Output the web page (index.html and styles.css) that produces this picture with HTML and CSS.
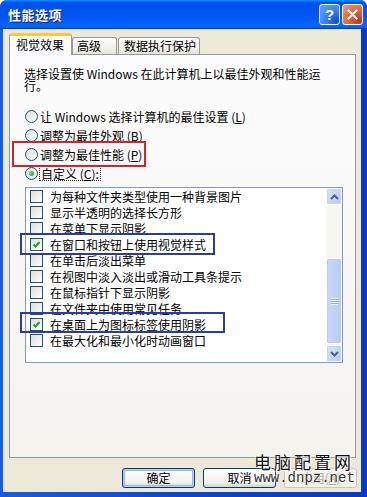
FILE: index.html
```html
<!DOCTYPE html>
<html lang="zh-CN">
<head>
<meta charset="utf-8">
<title>性能选项</title>
<link rel="stylesheet" href="styles.css">
</head>
<body>
<div class="window">
  <div class="titlebar">
    <span class="title">性能选项</span>
    <div class="tb-buttons">
      <span class="tb-btn help">?</span>
      <span class="tb-btn close"><svg width="11" height="11" viewBox="0 0 11 11"><path d="M1.5 1.5 L9.5 9.5 M9.5 1.5 L1.5 9.5" stroke="#fff" stroke-width="2" stroke-linecap="square"/></svg></span>
    </div>
  </div>
  <div class="client">
    <div class="tabs">
      <div class="tab active">视觉效果</div>
      <div class="tab t2">高级</div>
      <div class="tab t3">数据执行保护</div>
    </div>
    <div class="panel">
      <p class="desc">选择设置使 Windows 在此计算机上以最佳外观和性能运<br>行。</p>
      <div class="radios">
        <div class="radio-row"><span class="radio"></span><span>让 Windows 选择计算机的最佳设置 (<u>L</u>)</span></div>
        <div class="radio-row"><span class="radio"></span><span>调整为最佳外观 (<u>B</u>)</span></div>
        <div class="radio-row"><span class="radio"></span><span>调整为最佳性能 (<u>P</u>)</span></div>
        <div class="radio-row"><span class="radio on"></span><span class="focus">自定义 (<u>C</u>):</span></div>
      </div>
      <div class="listbox">
        <ul class="items">
          <li><span class="cb"></span>为每种文件夹类型使用一种背景图片</li>
          <li><span class="cb"></span>显示半透明的选择长方形</li>
          <li><span class="cb"></span>在菜单下显示阴影</li>
          <li><span class="cb"><svg width="11" height="11" viewBox="0 0 11 11"><path d="M2.5 5.5 L4.5 7.5 L8.5 3" fill="none" stroke="#21A121" stroke-width="2"/></svg></span>在窗口和按钮上使用视觉样式</li>
          <li><span class="cb"></span>在单击后淡出菜单</li>
          <li><span class="cb"></span>在视图中淡入淡出或滑动工具条提示</li>
          <li><span class="cb"></span>在鼠标指针下显示阴影</li>
          <li><span class="cb"></span>在文件夹中使用常见任务</li>
          <li><span class="cb"><svg width="11" height="11" viewBox="0 0 11 11"><path d="M2.5 5.5 L4.5 7.5 L8.5 3" fill="none" stroke="#21A121" stroke-width="2"/></svg></span>在桌面上为图标标签使用阴影</li>
          <li><span class="cb"></span>在最大化和最小化时动画窗口</li>
        </ul>
        <div class="scrollbar">
          <span class="sb-btn"><svg width="9" height="6" viewBox="0 0 9 6"><path d="M1 5 L4.5 1.5 L8 5" fill="none" stroke="#4D6185" stroke-width="2"/></svg></span>
          <span class="sb-track"></span>
          <span class="sb-thumb"><span class="grip"></span></span>
          <span class="sb-btn down"><svg width="9" height="6" viewBox="0 0 9 6"><path d="M1 1 L4.5 4.5 L8 1" fill="none" stroke="#4D6185" stroke-width="2"/></svg></span>
        </div>
      </div>
    </div>
    <div class="buttons">
      <span class="btn default">确定</span>
      <span class="btn">取消</span>
      <span class="btn disabled">应用(<u>A</u>)</span>
    </div>
  </div>
  <div class="mark red-box"></div>
  <div class="mark blue-box b1"></div>
  <div class="mark blue-box b2"></div>
  <div class="watermark">
    <div class="wm-cn">电脑配置网</div>
    <div class="wm-url">www.dnpz.net</div>
  </div>
</div>
</body>
</html>
```
FILE: styles.css
```css
* { box-sizing: border-box; }
html, body { margin: 0; padding: 0; background: #fff; }
body {
  width: 367px; height: 497px; overflow: hidden;
  font-family: "Noto Sans CJK SC", "Liberation Sans", sans-serif;
  font-size: 12px; color: #000;
}
u { text-decoration: underline; text-underline-offset: 1px; }

.window {
  position: relative;
  width: 367px; height: 497px;
  display: flex; flex-direction: column;
  background: linear-gradient(to right, #1A5BE0, #0A46D8 50%, #0838C8);
  border-radius: 7px 7px 0 0;
  overflow: hidden;
}
.titlebar {
  height: 29px; flex: none;
  display: flex; align-items: center; justify-content: space-between;
  padding: 0 4px 0 8px;
  background: linear-gradient(180deg, #0997ff, #0053ee 8%, #0050ee 40%, #06f 88%, #06f 93%, #005bff 95%, #003dd7 96%, #003dd7);
}
.title {
  color: #fff; font-weight: bold; font-size: 13px; letter-spacing: 0.5px;
  line-height: 14px; text-shadow: 1px 1px 0 #0F1A8C;
}
.tb-buttons { display: flex; gap: 2px; }
.tb-btn {
  width: 21px; height: 21px;
  border: 1px solid #fff; border-radius: 3px;
  display: flex; align-items: center; justify-content: center;
}
.help {
  background: radial-gradient(circle at 85% 85%, #0C4FD8 0%, #3A7EF2 45%, #6BA0F8 100%);
  color: #fff; font-family: "Liberation Sans", sans-serif; font-weight: bold; font-size: 15px; line-height: 1;
}
.close {
  background: radial-gradient(circle at 85% 85%, #C1361A 0%, #E2603A 45%, #EE9A7E 100%);
}

.client {
  flex: 1;
  margin: 0 6px 5px 3px;
  background: #ECE9D8;
  display: flex; flex-direction: column;
}
.tabs {
  height: 25px; flex: none;
  display: flex; align-items: flex-end;
  padding-left: 6px;
  position: relative; z-index: 1;
}
.tab {
  height: 17px;
  border: 1px solid #919B9C; border-bottom: none;
  border-radius: 3px 3px 0 0;
  background: linear-gradient(#FFFFFF, #F3F2EC 60%, #E6E4D8);
  line-height: 15px;
  white-space: nowrap;
}
.tab.active {
  width: 63px; height: 22px;
  margin-bottom: -1px;
  border-top: 3px solid #FFC83C;
  box-shadow: inset 0 0 0 0 transparent;
  background: #FCFCFE;
  padding-left: 6px;
  line-height: 17px;
}
.tab.t2 { width: 45px; padding-left: 4px; }
.tab.t3 { width: 82px; padding-left: 5px; margin-left: 1px; }

.panel {
  flex: none;
  height: 404px;
  margin: 0 5px 0 6px;
  border: 1px solid #919B9C;
  background: linear-gradient(#FCFCFE, #F4F3EE);
}
.desc {
  margin: 0;
  padding: 13px 0 0 14px;
  line-height: 12px;
  white-space: nowrap;
}
.radios {
  margin-top: 15px;
  padding-left: 15px;
  display: flex; flex-direction: column;
}
.radio-row {
  height: 19px;
  display: flex; align-items: center; gap: 2px;
  white-space: nowrap;
}
.radio {
  width: 13px; height: 13px; flex: none;
  border: 1px solid #1C5180; border-radius: 50%;
  background: linear-gradient(135deg, #DCDCD7, #FFFFFF);
  display: flex; align-items: center; justify-content: center;
}
.radio.on::after {
  content: ""; width: 5px; height: 5px; border-radius: 50%;
  background: radial-gradient(circle at 35% 35%, #62D95D, #21A121);
}
.focus {
  border: 1px dotted #333;
  padding: 0 1px;
  margin-left: -1px;
  line-height: 13px;
}
.listbox {
  margin: 4px 12px 0 15px;
  height: 176px;
  border: 1px solid #7F9DB9;
  background: #fff;
  display: flex;
}
.items {
  flex: 1;
  list-style: none;
  margin: 0; padding: 0 0 0 4px;
}
.items li {
  height: 16px;
  display: flex; align-items: center; gap: 7px;
  white-space: nowrap;
}
.cb {
  width: 13px; height: 13px; flex: none;
  border: 1px solid #1C5180;
  background: linear-gradient(135deg, #DCDCD7, #FFFFFF);
  display: flex; align-items: center; justify-content: center;
}
.scrollbar {
  width: 16px; flex: none;
  display: flex; flex-direction: column;
  background: #F7F6F1;
}
.sb-btn {
  height: 17px; flex: none;
  border: 1px solid #fff;
  border-radius: 2px;
  background: linear-gradient(135deg, #D6E2FD, #B7CBF8);
  box-shadow: inset 0 0 0 1px #C3D3FD;
  display: flex; align-items: center; justify-content: center;
}
.sb-btn.down { margin-top: 1px; }
.sb-track { flex: 1; }
.sb-thumb {
  height: 86px; flex: none;
  border: 1px solid #fff;
  border-radius: 2px;
  background: linear-gradient(to right, #C9D8FC, #B8CDF9);
  box-shadow: inset 0 0 0 1px #BACCF6;
  display: flex; align-items: center; justify-content: center;
}
.grip {
  width: 7px; height: 7px;
  background: repeating-linear-gradient(#EEF4FE 0 1px, #8CB0F8 1px 2px);
}

.buttons {
  flex: none;
  margin-top: 10px;
  display: flex; justify-content: flex-end; gap: 8px;
  padding-right: 4px;
}
.btn {
  width: 73px; height: 20px;
  border: 1px solid #003C74; border-radius: 3px;
  background: linear-gradient(#FFFFFF, #F3F2ED 75%, #D8D3C7);
  display: flex; align-items: center; justify-content: center;
  line-height: 1;
}
.btn.default { box-shadow: inset 0 0 0 1px #B9CEF3, inset 0 0 0 2px #9AB7EE; }
.btn.disabled {
  border-color: #C9C7BA; color: #ACA899;
  background: #F5F4EA;
}

.mark { position: absolute; border: 2px solid; }
.red-box { left: 12px; top: 141px; width: 134px; height: 26px; border-color: #D5232C; }
.blue-box { border-color: #2B3C9C; }
.b1 { left: 20px; top: 233px; width: 195px; height: 22px; }
.b2 { left: 20px; top: 312px; width: 205px; height: 21px; }

.watermark {
  position: absolute; left: 254px; top: 452px;
}
.wm-cn {
  font-size: 17px; line-height: 19px; letter-spacing: 3px;
  color: #111;
  text-shadow: 0 0 2px #fff, 0 0 2px #fff, 1px 1px 0 #fff;
}
.wm-url {
  font-family: "Liberation Mono", monospace;
  font-size: 14px; line-height: 14px;
  color: #333;
  text-shadow: 0 0 2px #fff, 0 0 2px #fff;
}
```
